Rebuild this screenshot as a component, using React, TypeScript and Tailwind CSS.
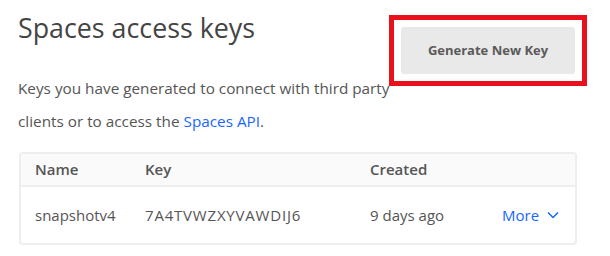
import React from 'react';

const rows = [{ name: 'snapshotv4', key: '7A4TVWZXYVAWDIJ6', created: '9 days ago' }];

const App = () => {
  return (
    <div className="w-[610px] h-[256px] bg-white text-[#555] font-['Open_Sans',sans-serif] pl-[18px] pr-[23px] overflow-hidden">
      <div className="flex justify-between items-start">
        <div className="flex-1 min-w-0">
          <h1 className="text-[26.8px] leading-none pt-[15px] text-[#444]">Spaces access keys</h1>
          <p className="text-[15.3px] leading-[33px] mt-[30px] w-[372px] text-[#555]">
            Keys you have generated to connect with third party clients or to access the{' '}
            <span className="text-[#1a66ff]">Spaces API</span>.
          </p>
        </div>
        <div className="shrink-0 mt-[15px] border-[5px] border-[#e8111c] p-[7px]">
          <button className="w-[174px] h-[47px] rounded-[3px] bg-[#e9e9e9] text-[13px] font-bold text-[#5a5a5a]">
            Generate New Key
          </button>
        </div>
      </div>

      {/* Keys table */}
      <div className="mt-[14px] ml-px mr-[10px] border-2 border-[#eeeeee] rounded-[4px] text-[15px]">
        <div className="flex items-center h-[33px] bg-[#fafafa] border-b-2 border-[#eeeeee] font-semibold text-[#555]">
          <div className="w-[124px] pl-[14px]">Name</div>
          <div className="w-[225px]">Key</div>
          <div>Created</div>
        </div>
        {rows.map((row) => (
          <div key={row.key} className="flex items-center h-[56px] text-[#555]">
            <div className="w-[124px] pl-[14px]">{row.name}</div>
            <div className="w-[225px] tracking-[0.8px]">{row.key}</div>
            <div className="w-[132px]">{row.created}</div>
            <div className="flex items-center gap-[8px] text-[#1a66ff]">
              More
              <svg width="12" height="8" viewBox="0 0 12 8" fill="none" stroke="#1a66ff" strokeWidth="1.5">
                <path d="M1 1.5l5 5 5-5" />
              </svg>
            </div>
          </div>
        ))}
      </div>
    </div>
  );
};

export default App;
